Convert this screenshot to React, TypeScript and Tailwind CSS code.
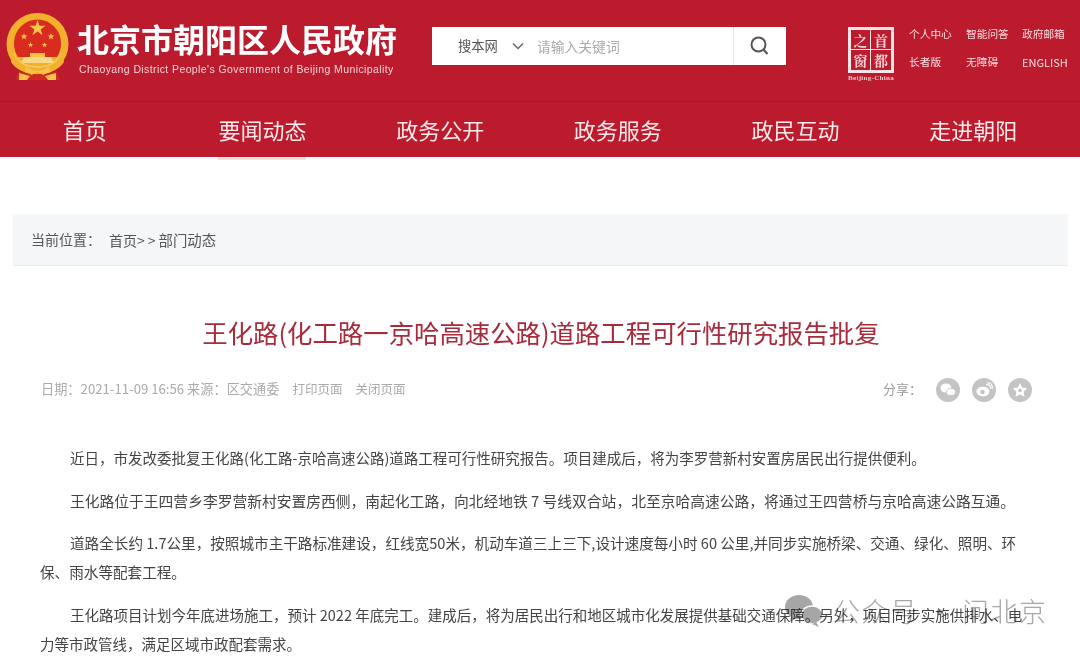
const navItems = ['首页', '要闻动态', '政务公开', '政务服务', '政民互动', '走进朝阳'];
const topLinks = ['个人中心', '智能问答', '政府邮箱', '长者版', '无障碍', 'ENGLISH'];

function Emblem() {
  return (
    <svg width="64" height="68" viewBox="0 0 64 68" className="shrink-0">
      <circle cx="31.500" cy="31" r="31" fill="#f2b02c" />
      <path d="M8 30a23.500 23.500 0 0 1 47 0c0 6-1.500 10-4 14H12c-2.500-4-4-8-4-14z" fill="#d92b20" />
      <path d="M8 40c3 9 12 14 23.500 14S52 49 55 40" fill="none" stroke="#f8c95a" strokeWidth="1.500" />
      <path d="M31.500 7l1.900 5.800h6.100l-4.900 3.600 1.900 5.800-5-3.600-5 3.600 1.900-5.800-4.900-3.600h6.100z" fill="#f8c64a" />
      <path d="M18 14l.9 2.500h2.600l-2.100 1.600.8 2.500-2.200-1.500-2.200 1.500.8-2.500-2.100-1.600h2.600zM45 14l.9 2.500h2.600l-2.100 1.600.8 2.500-2.200-1.500-2.200 1.500.8-2.500-2.100-1.600h2.600z" fill="#f8c64a" transform="translate(0 6)" />
      <path d="M24.500 24l.7 2h2.100l-1.700 1.300.7 2-1.800-1.200-1.800 1.200.7-2-1.700-1.300h2.100zM38.500 24l.7 2h2.100l-1.700 1.300.7 2-1.800-1.200-1.800 1.200.7-2-1.700-1.300h2.100z" fill="#f8c64a" transform="translate(0 5)" />
      <path d="M24 40h15v4H24z" fill="#f6c343" />
      <path d="M18 44h27l3 6H15z" fill="#f9d987" />
      <path d="M6 44c5 8 14 12 25.500 12S52 52 57 44l1 5c-5 8-15 12-26.500 12S10 57 5 49z" fill="#f2b02c" />
      <path d="M13 58c4 2 10 3 18.500 3S46 60 50 58l4 9H9z" fill="#cf2a1e" />
      <path d="M20 53c3 3 8 5 11.500 5S40 56 43 53l1.500 6c-3 1-4.500 1-7 3l-6-3-6 3c-2.500-2-4-2-7-3z" fill="#f6c24a" />
      <path d="M13 60l11 3-3 4h-8zM50 60l-11 3 3 4h8z" fill="#f6c24a" />
    </svg>
  );
}

function CapitalLogo() {
  return (
    <div className="flex flex-col items-center w-[50px]">
      <div className="grid h-[46px] w-[46px] grid-cols-2 grid-rows-2 border-[3px] border-[#f7e4e6] bg-[#bc1a2d] text-[14px] leading-none font-bold text-[#f5d5d9] [font-family:'Noto_Serif_CJK_SC','Noto_Sans_CJK_SC',serif]">
        <span className="flex items-center justify-center overflow-hidden border-r border-b border-[#f7e4e6]">之</span>
        <span className="flex items-center justify-center overflow-hidden border-b border-[#f7e4e6]">首</span>
        <span className="flex items-center justify-center overflow-hidden border-r border-[#f7e4e6]">窗</span>
        <span className="flex items-center justify-center overflow-hidden">都</span>
      </div>
      <span className="mt-[1px] text-[7px] leading-[8px] font-bold tracking-[0.3px] text-[#f3c9ce] [font-family:'Liberation_Serif',serif] whitespace-nowrap">Beijing-China</span>
    </div>
  );
}

export default function App() {
  return (
    <div className="relative w-[1080px] h-[657px] overflow-hidden bg-white [font-family:'Noto_Sans_CJK_SC',sans-serif]">
      {/* top band */}
      <header className="bg-[#bc1a2d] text-white">
        <div className="flex h-[102px] items-start border-b border-[#a91526]">
          <div className="ml-[6px] mt-[13px]">
            <Emblem />
          </div>
          <div className="ml-[7px] mt-[18px]">
            <div className="text-[32px] leading-[40px] font-bold whitespace-nowrap">北京市朝阳区人民政府</div>
            <div className="ml-[2px] mt-[4px] text-[10.5px] leading-[14px] text-[#f5d3d7] tracking-[0.4px] whitespace-nowrap [font-family:'Liberation_Sans',sans-serif]">
              Chaoyang District People's Government of Beijing Municipality
            </div>
          </div>

          <div className="ml-[35px] mt-[27px] flex h-[38px] w-[354px] items-center bg-white">
            <span className="ml-[26px] text-[13.3px] text-[#555]">搜本网</span>
            <svg width="12" height="8" viewBox="0 0 12 8" className="ml-[14px]">
              <path d="M1 1.500l5 5 5-5" fill="none" stroke="#666" strokeWidth="1.500" />
            </svg>
            <span className="ml-[13px] text-[13.8px] text-[#aaa] whitespace-nowrap">请输入关键词</span>
            <div className="ml-auto flex h-full w-[53px] items-center justify-center border-l border-[#e2e2e2] pr-[3px]">
              <svg width="20" height="20" viewBox="0 0 20 20" fill="none" stroke="#555" strokeWidth="2">
                <circle cx="9.500" cy="8.500" r="7" />
                <path d="M14.500 13.500l4 4.500" />
              </svg>
            </div>
          </div>

          <div className="ml-[60px] mt-[27px]">
            <CapitalLogo />
          </div>
          <div className="ml-[13px] mt-[20px] grid grid-cols-[57px_56px_auto] grid-rows-[28px_28px] items-center text-[10.7px] text-[#f8dfe2] whitespace-nowrap">
            {topLinks.map(link => (
              <span key={link} className={link === 'ENGLISH' ? 'text-[11px]' : ''}>{link}</span>
            ))}
          </div>
        </div>

        <nav className="-ml-[4px] grid h-[55px] w-[1066px] grid-cols-6 text-[22px] text-[#fbeaec]">
          {navItems.map((item, i) => (
            <div key={item} className="relative flex items-center justify-center">
              <span>{item}</span>
              {i === 1 && <div className="absolute bottom-[-3px] h-[3px] w-[88px] bg-[#fbe3d3]" />}
            </div>
          ))}
        </nav>
      </header>

      {/* breadcrumb */}
      <div className="mx-[13px] mt-[57px] flex h-[52px] w-[1055px] items-center border-b border-[#e9eaec] bg-[#f5f6f7] pl-[18px] text-[14px] text-[#555]">
        <span>当前位置：</span>
        <span className="ml-[8px]">首页<span className="tracking-[3px]">&gt;&gt;</span><span className="text-[14.4px]">部门动态</span></span>
      </div>

      {/* article */}
      <h1 className="mt-[47px] ml-[2px] text-center text-[25.4px] leading-[38px] text-[#a92a3a]">
        王化路(化工路一京哈高速公路)道路工程可行性研究报告批复
      </h1>

      <div className="mt-[25px] flex h-[26px] items-center pl-[41px] pr-[48px] text-[12.5px] text-[#aaa]">
        <span className="text-[13.2px]">日期：2021-11-09 16:56 来源：区交通委</span>
        <span className="ml-[13px]">打印页面</span>
        <span className="ml-[13px]">关闭页面</span>
        <span className="ml-auto mr-[14px] text-[13px] text-[#999]">分享：</span>
        <div className="mt-[1px] flex gap-[12px]">
          <div className="flex h-[24px] w-[24px] items-center justify-center rounded-full bg-[#c4c4c4]">
            <svg width="16" height="14" viewBox="0 0 16 14" fill="#fff">
              <ellipse cx="6" cy="5" rx="5.500" ry="4.500" />
              <ellipse cx="11" cy="9" rx="4.500" ry="3.600" stroke="#c4c4c4" strokeWidth="0.800" />
            </svg>
          </div>
          <div className="flex h-[24px] w-[24px] items-center justify-center rounded-full bg-[#c4c4c4]">
            <svg width="17" height="15" viewBox="0 0 17 15">
              <ellipse cx="7" cy="9.500" rx="6.500" ry="4.800" fill="#fff" />
              <circle cx="6.500" cy="10" r="2.200" fill="#c4c4c4" />
              <path d="M10 3c3-1 5 1 4.500 4M11 1c4-.5 6 2.500 5 6" fill="none" stroke="#fff" strokeWidth="1.200" />
            </svg>
          </div>
          <div className="flex h-[24px] w-[24px] items-center justify-center rounded-full bg-[#c4c4c4]">
            <svg width="16" height="16" viewBox="0 0 16 16">
              <path d="M8 1l2.200 4.600 5 .7-3.600 3.500.9 5L8 12.400 3.500 14.800l.9-5L.8 6.300l5-.7z" fill="#fff" />
              <circle cx="8" cy="8.500" r="1.800" fill="#c4c4c4" />
            </svg>
          </div>
        </div>
      </div>

      <div className="mt-[41px] pl-[40px] pr-[50px] text-[14.6px] leading-[29px] text-[#444]">
        <p className="mb-[13.500px] indent-[30px] text-[14.5px] whitespace-nowrap">近日，市发改委批复王化路(化工路-京哈高速公路)道路工程可行性研究报告。项目建成后，将为李罗营新村安置房居民出行提供便利。</p>
        <p className="mb-[13.500px] indent-[30px] text-[14.77px] whitespace-nowrap">王化路位于王四营乡李罗营新村安置房西侧，南起化工路，向北经地铁 7 号线双合站，北至京哈高速公路，将通过王四营桥与京哈高速公路互通。</p>
        <p className="mb-[13.500px] indent-[30px]">道路全长约 1.7公里，按照城市主干路标准建设，红线宽50米，机动车道三上三下,设计速度每小时 60 公里,并同步实施桥梁、交通、绿化、照明、环保、雨水等配套工程。</p>
        <p className="indent-[30px] text-[14.5px]">王化路项目计划今年底进场施工，预计 2022 年底完工。建成后，将为居民出行和地区城市化发展提供基础交通保障。另外，项目同步实施供排水、电力等市政管线，满足区域市政配套需求。</p>
      </div>

      {/* watermark */}
      <div className="absolute left-[784px] top-[593px] flex items-center mix-blend-multiply">
        <svg width="40" height="36" viewBox="0 0 40 36" fill="#a6a6a6">
          <ellipse cx="15" cy="14" rx="14" ry="12" />
          <path d="M7 23l-1 6 7-4z" />
          <ellipse cx="28" cy="22" rx="11" ry="9" stroke="#fff" strokeWidth="1.500" />
          <path d="M32 29l3 5-7-3z" />
        </svg>
        <span className="ml-[9px] text-[27px] leading-[36px] font-light tracking-[1.5px] text-[#a8a8a8] whitespace-nowrap">公众号 · 问北京</span>
      </div>
    </div>
  );
}
